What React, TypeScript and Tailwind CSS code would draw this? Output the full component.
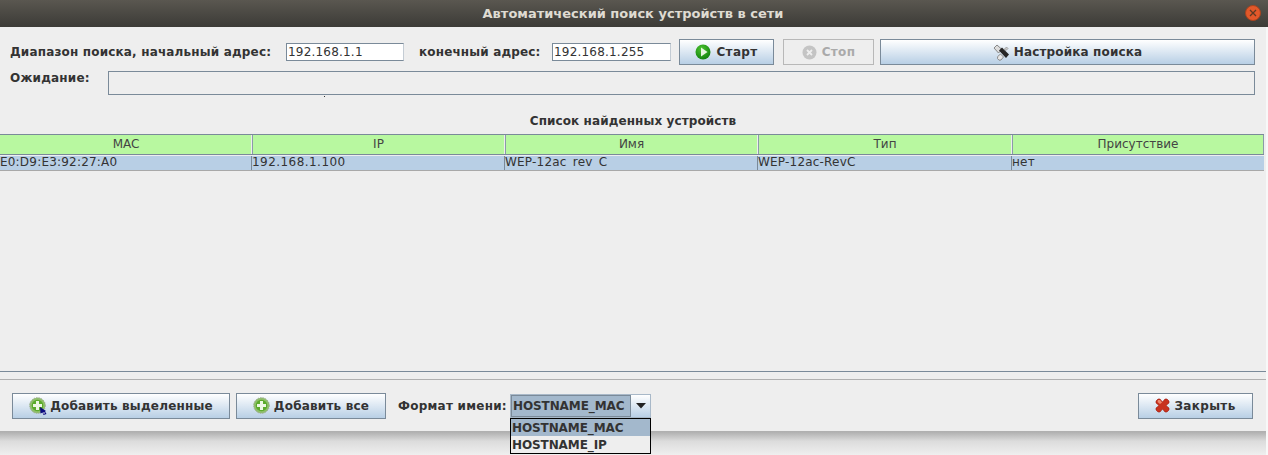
import React from 'react';

const font = { fontFamily: '"DejaVu Sans", sans-serif' };

const btn =
  'h-[26px] flex items-center justify-center gap-[4px] border border-[#7a8a99] bg-gradient-to-b from-[#ffffff] to-[#b8cfe5] text-[12px] font-bold text-[#333333] tracking-[0.2px]';

const PlusIcon = () => (
  <svg width="17" height="17" viewBox="0 0 17 17">
    <circle cx="8.5" cy="8.5" r="7.8" fill="#8fbf6a" stroke="#9aa88f" strokeWidth="1" strokeDasharray="1.5 1" />
    <circle cx="8.5" cy="8.5" r="5.8" fill="#5cab2c" />
    <path d="M7 4h3v3h3v3h-3v3H7v-3H4V7h3z" fill="#eef7e4" />
  </svg>
);

const PlayIcon = () => (
  <svg width="16" height="16" viewBox="0 0 16 16">
    <defs>
      <radialGradient id="pl" cx="40%" cy="30%" r="80%">
        <stop offset="0" stopColor="#4cc430" />
        <stop offset="1" stopColor="#0b7a0b" />
      </radialGradient>
    </defs>
    <circle cx="8" cy="8" r="7.5" fill="url(#pl)" />
    <path d="M6 3.500l6.500 4.500-6.500 4.500z" fill="#e6f5e0" />
  </svg>
);

const StopIcon = () => (
  <svg width="15" height="15" viewBox="0 0 15 15">
    <circle cx="7.5" cy="7.5" r="7" fill="#c4c4c4" />
    <path d="M5 5l5 5M10 5l-5 5" stroke="#eeeeee" strokeWidth="1.8" />
  </svg>
);

const ToolsIcon = () => (
  <svg width="17" height="17" viewBox="0 0 17 17">
    <path d="M1 4l3-3 5 4.500-3.500 3.500z" fill="#dcdcdc" stroke="#7c7c7c" strokeWidth="0.9" />
    <path d="M6 6.500l3-3 7 7-3 3.500z" fill="#262626" />
    <path d="M7.500 10l3 3-2.500 3-2 .2-1.500-1.700.2-2z" fill="#e6e6e6" stroke="#808080" strokeWidth="0.9" />
    <path d="M11 5.500l2.500-2.500 1.500 1.500-2 2z" fill="#c8c8c8" stroke="#8a8a8a" strokeWidth="0.7" />
  </svg>
);

const CloseIcon = () => (
  <svg width="15" height="15" viewBox="0 0 15 15">
    <path
      d="M3 1h2l2.500 3L10 1h2l2 2v2l-3 2.500L14 10v2l-2 2h-2L7.500 11 5 14H3l-2-2v-2l3-2.500L1 5V3z"
      fill="#c8321e"
      stroke="#a01c10"
      strokeWidth="0.6"
    />
    <path d="M3 2h2l2 2.500L5 6 2.500 4z" fill="#ee8a70" />
  </svg>
);

const columns = [
  { title: 'MAC', value: 'E0:D9:E3:92:27:A0', w: 'w-[252px]', t: '' },
  { title: 'IP', value: '192.168.1.100', w: 'w-[253px]', t: 'tracking-[0.45px]' },
  { title: 'Имя', value: 'WEP-12ac_rev_C', w: 'w-[253px]', t: '' },
  { title: 'Тип', value: 'WEP-12ac-RevC', w: 'w-[254px]', t: '' },
  { title: 'Присутствие', value: 'нет', w: 'flex-1', t: '' },
];

export default function App() {
  return (
    <div className="w-[1268px] h-[455px] overflow-hidden bg-[#f0f0f0] relative" style={font}>
      {/* Title bar */}
      <div className="h-[27px] flex items-center justify-center relative pr-[2px] bg-gradient-to-b from-[#5a5750] to-[#3c3b37]">
        <span className="text-[13px] font-bold text-[#dfdbd2]">
          Автоматический поиск устройств в сети
        </span>
        <div className="absolute right-[7px] top-[5px] w-[16px] h-[16px] rounded-full bg-[#e2582a] border border-[#a8431f] flex items-center justify-center">
          <svg width="8" height="8" viewBox="0 0 8 8">
            <path d="M1 1l6 6M7 1l-6 6" stroke="#5c3a24" strokeWidth="1.3" />
          </svg>
        </div>
      </div>

      <div className="h-[428px] bg-[#eeeeee] flex flex-col border-r-2 border-[#f8f8f8]">
        {/* Search range */}
        <div className="h-[26px] mt-[12px] flex items-center pl-[10px] text-[12px] font-bold text-[#333333]">
          <span className="w-[276px] tracking-[0.17px]">Диапазон поиска, начальный адрес:</span>
          <div className="w-[118px] h-[18px] bg-white border border-[#7a8a99] border-r-[#c4ccd4] text-[12px] font-normal leading-[16px] pl-[1px] tracking-[0.2px]">
            192.168.1.1
          </div>
          <span className="ml-[15px] w-[133px] tracking-[0.15px]">конечный адрес:</span>
          <div className="w-[119px] h-[18px] bg-white border border-[#7a8a99] border-r-[#c4ccd4] text-[12px] font-normal leading-[16px] pl-[1px] tracking-[0.2px]">
            192.168.1.255
          </div>
          <button className={`${btn} w-[95px] ml-[8px] tracking-[0.35px] gap-[5px]`}>
            <PlayIcon /> Старт
          </button>
          <button className="h-[26px] w-[91px] ml-[9px] flex items-center justify-center gap-[5px] border border-[#b8b8b8] bg-[#eeeeee] text-[12px] font-bold text-[#aaaaaa] tracking-[0.35px]">
            <StopIcon /> Стоп
          </button>
          <button className={`${btn} w-[375px] ml-[6px] tracking-[0.15px] gap-[3px]`}>
            <ToolsIcon /> Настройка поиска
          </button>
        </div>

        {/* Waiting */}
        <div className="flex mt-[6px] pl-[10px] text-[12px] font-bold leading-[15px] text-[#333333]">
          <span className="w-[98px] tracking-[0.2px]">Ожидание:</span>
          <div className="w-[1147px] h-[24px] border border-[#7a8a99] bg-[#eeeeee]" />
        </div>

        <div className="mt-[17px] h-[18px] text-center text-[12px] font-bold text-[#333333] tracking-[0.1px] leading-[18px]">
          Список найденных устройств
        </div>

        {/* Devices table */}
        <div className="mt-[4px] h-[238px] border-b border-[#7a8a99]">
          <div className="flex h-[21px] border-t border-b border-[#7a8a99] bg-[#b8f8a0] border-r mr-[2px]">
            {columns.map((c) => (
              <div
                key={c.title}
                className={`${c.w} border-r border-[#eeeeee] last:border-r-0 text-center pl-[1px] text-[12px] text-[#444444] leading-[19px] shadow-[1px_0_0_#8a9aa9]`}
              >
                {c.title}
              </div>
            ))}
          </div>
          <div className="flex h-[15px] mt-[1px] bg-[#b8cfe5] border-b border-[#a8a8a8] mr-[2px]">
            {columns.map((c) => (
              <div key={c.title} className={`${c.w} border-r border-[#7a8a99] last:border-r-0`}>
                <div className={`h-[12px] overflow-hidden text-[12px] text-[#333333] leading-[12px] tracking-[0.2px] whitespace-nowrap ${c.t}`}>
                  {c.value}
                </div>
              </div>
            ))}
          </div>
        </div>

        {/* Bottom bar */}
        <div className="mt-[7px] h-[53px] border-t border-b border-[#b0b0b0] flex items-center pl-[12px] pr-[13px] text-[12px] font-bold text-[#333333]">
          <button className={`${btn} w-[218px]`}>
            <span className="relative flex">
              <PlusIcon />
              {/* mouse pointer caught in the shot */}
              <svg className="absolute left-[11px] top-[10px]" width="7" height="8" viewBox="0 0 7 8">
                <path d="M0 0l6 4-1 .5 1.500 2.500-3 1-1-2.500-2 1z" fill="#0a0a80" />
                <circle cx="4" cy="6" r="0.8" fill="#ffffff" />
              </svg>
            </span>
            Добавить выделенные
          </button>
          <button className={`${btn} w-[150px] ml-[6px]`}>
            <PlusIcon /> Добавить все
          </button>
          <span className="ml-[12px] w-[112px] tracking-[0.25px]">Формат имени:</span>
          <div className="w-[141px] h-[24px] flex border border-[#a8b8c8]">
            <div className="w-[120px] bg-[#a3b8cc] border border-[#7a8a99] text-[#333333] leading-[21px] pl-[1px] tracking-[-0.1px]">
              HOSTNAME_MAC
            </div>
            <div className="flex-1 bg-gradient-to-b from-[#ffffff] to-[#b8cfe5] flex items-center justify-center">
              <svg width="10" height="6" viewBox="0 0 10 6">
                <path d="M0 0h10L5 5.500z" fill="#222222" />
              </svg>
            </div>
          </div>
          <button className={`${btn} w-[115px] ml-auto tracking-[0.35px]`}>
            <CloseIcon /> Закрыть
          </button>
        </div>

        {/* Window shadow */}
        <div className="flex-1 bg-gradient-to-b from-[#b0b0b0] via-[#dcdcdc] via-40% to-[#efefef]" />
      </div>

      {/* Combo popup */}
      <div className="absolute left-[510px] top-[418px] w-[141px] h-[36px] border border-black bg-[#eeeeee] text-[12px] font-bold text-[#333333] tracking-[-0.1px]">
        <div className="h-[17px] bg-[#a3b8cc] leading-[18px] pl-[1px]">HOSTNAME_MAC</div>
        <div className="h-[17px] leading-[18px] pl-[1px]">HOSTNAME_IP</div>
      </div>
      <div className="absolute left-[324px] top-[96px] w-[1px] h-[1px] bg-[#333333]" />
    </div>
  );
}
